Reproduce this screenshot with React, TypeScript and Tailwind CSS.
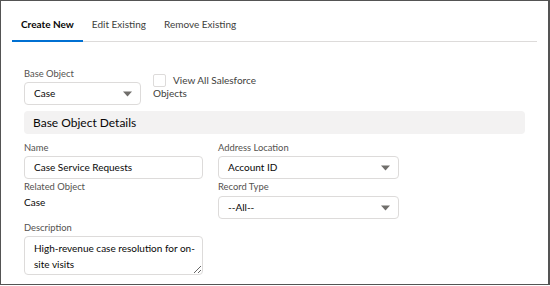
import React from "react";

const font = { fontFamily: '"Lato", "Open Sans", sans-serif' };

function Arrow() {
  return (
    <svg width="9" height="6" viewBox="0 0 9 6" className="shrink-0">
      <path d="M0 0.5 H9 L4.5 5.5 Z" fill="#706e6b" />
    </svg>
  );
}

function SelectBox({ value, className }: { value: string; className: string }) {
  return (
    <div
      className={`flex h-[23px] items-center justify-between rounded-[4px] border border-[#dddbda] bg-white pl-[9px] pr-[8px] text-[10px] text-[#080707] ${className}`}
    >
      <span>{value}</span>
      <Arrow />
    </div>
  );
}

function Label({ children }: { children: React.ReactNode }) {
  return <div className="text-[9.4px] leading-[12px] text-[#54524f]">{children}</div>;
}

export default function App() {
  const tabs = ["Create New", "Edit Existing", "Remove Existing"];

  return (
    <div style={font} className="h-[285px] w-[550px] overflow-hidden border border-r-2 border-[#545454] bg-white">
      <div className="mx-[11px] flex border-b border-[#dddbda]">
        {tabs.map((tab, i) => (
          <div
            key={tab}
            className={`-mb-px px-[9px] pb-[9px] pt-[16px] text-[10px] leading-[14px] ${
              i === 0
                ? "border-b-2 border-[#0070d2] font-bold text-[#080707]"
                : "border-b-2 border-transparent text-[#3e3e3c]"
            }`}
          >
            {tab}
          </div>
        ))}
      </div>

      <div className="px-[23px] pt-[26px]">
        <div className="flex gap-[12px]">
          <div>
            <Label>Base Object</Label>
            <SelectBox value="Case" className="mt-[2px] w-[117px]" />
          </div>
          <div className="pt-[6px] text-[10px] leading-[13px] text-[#3e3e3c]">
            <div className="flex items-center gap-[7px]">
              <div className="h-[13px] w-[13px] rounded-[2px] border border-[#dddbda]" />
              <span>View All Salesforce</span>
            </div>
            <div>Objects</div>
          </div>
        </div>

        <div className="mt-[6px] flex h-[23px] items-center rounded-[4px] bg-[#f3f2f2] pl-[9px] text-[12px] text-[#080707]">
          Base Object Details
        </div>

        <div className="mt-[8px] flex gap-[15px]">
          <div className="w-[179px]">
            <Label>Name</Label>
            <div className="mt-[2px] flex h-[23px] items-center rounded-[4px] border border-[#dddbda] pl-[9px] text-[10px] text-[#080707]">
              Case Service Requests
            </div>
            <div className="mt-[2px]">
              <Label>Related Object</Label>
            </div>
            <div className="mt-[3px] text-[10px] leading-[13px] text-[#080707]">Case</div>
            <div className="mt-[13px]">
              <Label>Description</Label>
            </div>
            <textarea
              readOnly
              value="High-revenue case resolution for on-site visits"
              className="mt-[2px] block h-[39px] w-[179px] resize-y rounded-[4px] border border-[#dddbda] py-[3px] pl-[9px] pr-[4px] text-[10px] leading-[16px] text-[#080707] outline-none"
            />
          </div>
          <div className="w-[181px]">
            <Label>Address Location</Label>
            <SelectBox value="Account ID" className="mt-[2px]" />
            <div className="mt-[2px]">
              <Label>Record Type</Label>
            </div>
            <SelectBox value="--All--" className="mt-[3px]" />
          </div>
        </div>
      </div>
    </div>
  );
}
